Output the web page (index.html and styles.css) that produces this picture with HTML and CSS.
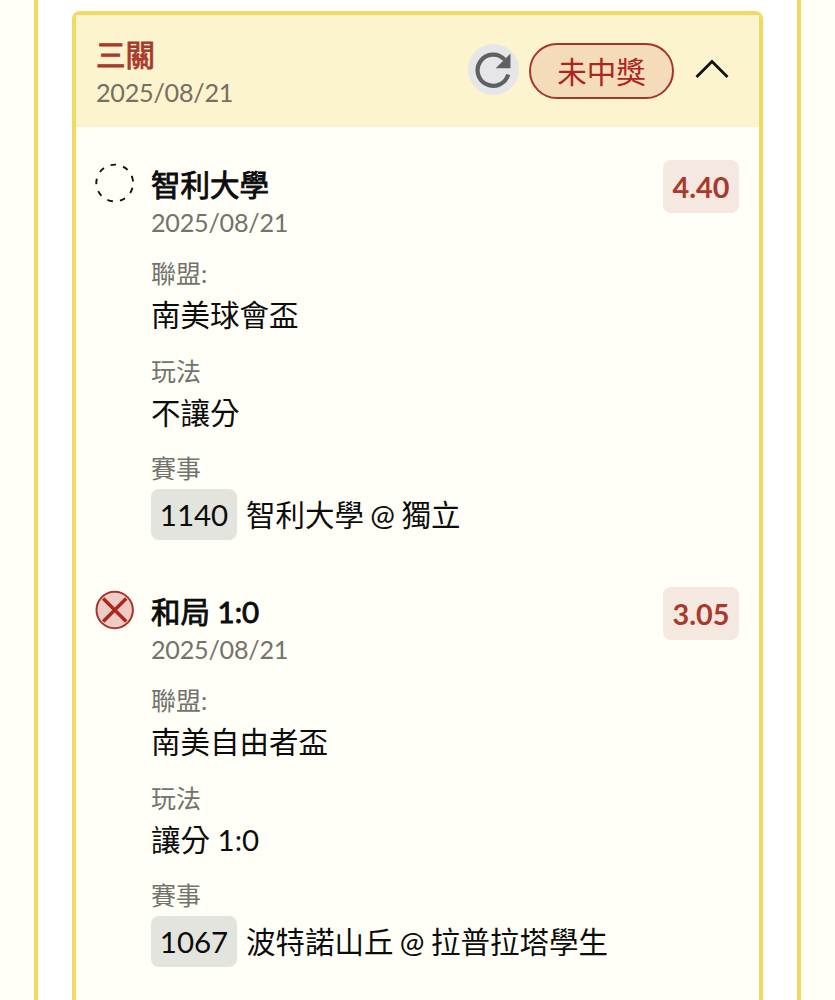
FILE: index.html
```html
<!DOCTYPE html>
<html lang="zh-Hant">
<head>
  <meta charset="UTF-8">
  <title>投注紀錄</title>
  <meta name="viewport" content="width=device-width, initial-scale=1.0">
  <link rel="stylesheet" href="styles.css">
</head>
<body>
  <main class="panel">
    <section class="card">
      <header class="card-header">
        <div class="card-title">
          <h2>三關</h2>
          <div class="date">2025/08/21</div>
        </div>
        <button class="refresh" aria-label="重新整理">
          <svg width="51" height="51" viewBox="0 0 51 51">
            <path d="M40.2 30.5 A15.6 15.6 0 1 1 36.6 15.6" fill="none" stroke="#5f6062" stroke-width="4.2"/>
            <path d="M42.5 9.5 V24.3 H27.7 Z" fill="#5f6062"/>
          </svg>
        </button>
        <span class="status">未中獎</span>
        <svg class="chevron" width="34" height="20" viewBox="0 0 34 20">
          <path d="M1.5 18 L17 2.5 L32.5 18" fill="none" stroke="#111" stroke-width="2.8"/>
        </svg>
      </header>

      <div class="bets">
        <article class="bet">
          <svg class="mark" width="40" height="40" viewBox="0 0 40 40">
            <circle cx="20.7" cy="20" r="18.4" fill="none" stroke="#111" stroke-width="1.9" stroke-dasharray="5.6 7.245" stroke-dashoffset="-4.9"/>
          </svg>
          <div class="info">
            <h3>智利大學</h3>
            <div class="date">2025/08/21</div>
            <dl>
              <dt>聯盟:</dt>
              <dd>南美球會盃</dd>
              <dt>玩法</dt>
              <dd>不讓分</dd>
              <dt>賽事</dt>
              <dd class="match"><span class="code">1140</span>智利大學 @ 獨立</dd>
            </dl>
          </div>
          <span class="odds">4.40</span>
        </article>

        <article class="bet">
          <svg class="mark" width="40" height="40" viewBox="0 0 40 40">
            <circle cx="20.7" cy="20" r="18.2" fill="#efcdc6" stroke="#a8352b" stroke-width="2"/>
            <path d="M9.2 8.5 L32.2 31.5 M32.2 8.5 L9.2 31.5" stroke="#ab261c" stroke-width="3.4"/>
          </svg>
          <div class="info">
            <h3>和局 1:0</h3>
            <div class="date">2025/08/21</div>
            <dl>
              <dt>聯盟:</dt>
              <dd>南美自由者盃</dd>
              <dt>玩法</dt>
              <dd>讓分 1:0</dd>
              <dt>賽事</dt>
              <dd class="match"><span class="code">1067</span>波特諾山丘 @ 拉普拉塔學生</dd>
            </dl>
          </div>
          <span class="odds">3.05</span>
        </article>
      </div>
    </section>
  </main>
</body>
</html>
```
FILE: styles.css
```css
* {
  box-sizing: border-box;
}
body {
  margin: 0;
  background-color: #fffff7;
  color: #0c0c0c;
  font-family: Lato, "Noto Sans CJK TC", sans-serif;
  font-size: 29.5px;
}
h2, h3, dl, dd {
  margin: 0;
}
.panel {
  width: 767px;
  height: 1000px;
  margin-left: 34px;
  padding: 11px 34px 0;
  background-color: #fff;
  border: solid #f2da62;
  border-width: 0 4px;
}
.card {
  height: 989px;
  border: 4px solid #f2da62;
  border-bottom: none;
  border-radius: 8px 8px 0 0;
  background-color: #fffff7;
}
.card-header {
  display: flex;
  align-items: flex-start;
  height: 112px;
  padding: 0 30px 0 20px;
  background-color: #fcf3cf;
}
.card-title {
  flex: 1;
  padding-top: 19px;
}
.card-title h2 {
  color: #a93a2b;
  font-size: 29.5px;
  line-height: 42px;
}
h2, h3 {
  font-weight: normal;
  -webkit-text-stroke: 0.9px currentColor;
}
.date {
  color: #73736e;
  font-size: 25.2px;
  letter-spacing: -0.25px;
  line-height: 33px;
}
.card-header .date {
  color: #75705f;
}
.refresh {
  width: 51px;
  height: 51px;
  margin-top: 29px;
  padding: 0;
  border: none;
  border-radius: 50%;
  background-color: #e6e6e8;
  cursor: pointer;
}
.refresh svg {
  display: block;
}
.status {
  width: 145px;
  height: 56px;
  margin: 28px 21px 0 10px;
  border: 2px solid #a5362a;
  border-radius: 28px;
  background-color: #f4dcbb;
  color: #ab261c;
  line-height: 53px;
  text-align: center;
}
.chevron {
  margin-top: 44px;
}
.bets {
  padding: 33px 20px 0;
}
.bet {
  display: flex;
  align-items: flex-start;
  height: 380px;
}
.bet + .bet {
  margin-top: 47px;
}
.mark {
  flex: none;
  margin: 3px 17px 0 -2px;
}
.info {
  flex: 1;
  padding-top: 4px;
}
.info h3 {
  font-size: 29.5px;
  line-height: 42px;
}
dl {
  padding-top: 16px;
}
dt {
  color: #73736e;
  font-size: 25px;
  line-height: 36px;
}
dd {
  height: 47px;
  margin-bottom: 14.7px;
  line-height: 48px;
  white-space: nowrap;
}
.match {
  display: flex;
  align-items: center;
  height: 51px;
  margin: 3px 0 0;
  word-spacing: -1.2px;
}
.code {
  width: 86px;
  height: 51px;
  margin-right: 9px;
  border-radius: 8px;
  background-color: #e4e4de;
  line-height: 52px;
  text-align: center;
}
.odds {
  width: 76px;
  height: 53px;
  border-radius: 8px;
  background-color: #f4e8e1;
  color: #a93a2b;
  font-size: 28.8px;
  font-weight: bold;
  line-height: 54px;
  text-align: center;
}
```
